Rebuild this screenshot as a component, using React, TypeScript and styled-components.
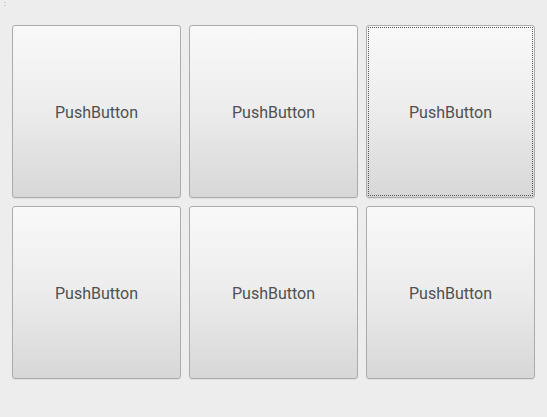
import styled, { createGlobalStyle } from "styled-components";

const GlobalStyle = createGlobalStyle`
  html, body {
    margin: 0;
    padding: 0;
    background: #ededed;
  }
  body {
    font-family: Roboto, "Liberation Sans", sans-serif;
    width: 547px;
    height: 417px;
    overflow: hidden;
  }
`;

const labels = ["PushButton", "PushButton", "PushButton", "PushButton", "PushButton", "PushButton"];

export default function App() {
  return (
    <>
      <GlobalStyle />
      <Window>
        <Corner>:</Corner>
        <Grid>
          {labels.map((label, i) => (
            <PushButton key={i} $focused={i === 2}>
              {label}
            </PushButton>
          ))}
        </Grid>
      </Window>
    </>
  );
}

const Window = styled.div`
  width: 547px;
  height: 417px;
  background: #ededed;
  display: flex;
  flex-direction: column;
`;

const Corner = styled.div`
  height: 25px;
  padding-left: 4px;
  font-size: 7px;
  line-height: 8px;
  color: #888888;
`;

const Grid = styled.div`
  display: grid;
  grid-template-columns: repeat(3, 169px);
  grid-auto-rows: 173px;
  gap: 8px;
  padding-left: 12px;
`;

const PushButton = styled.button<{ $focused?: boolean }>`
  box-sizing: border-box;
  border: 1px solid #ababab;
  border-radius: 3px;
  background: linear-gradient(to bottom, #f9f9f9 0%, #ececec 50%, #d7d7d7 100%);
  box-shadow: 0 1px 0 rgba(0, 0, 0, 0.06);
  font-family: Roboto, "Liberation Sans", sans-serif;
  font-size: 16px;
  color: #505050;
  padding: 2px 0 0;
  margin: 0;
  display: flex;
  align-items: center;
  justify-content: center;
  outline: ${(p) => (p.$focused ? "1px dotted #555555" : "none")};
  outline-offset: -3px;
`;
